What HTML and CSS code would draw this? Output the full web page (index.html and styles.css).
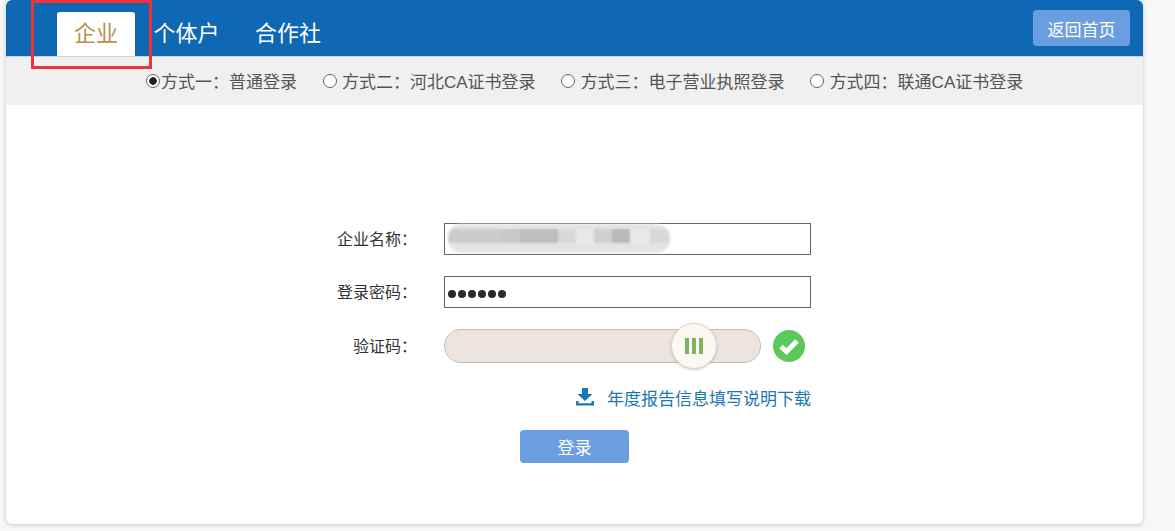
FILE: index.html
```html
<!DOCTYPE html>
<html lang="zh-CN">
<head>
<meta charset="utf-8">
<title>登录</title>
<link rel="stylesheet" href="styles.css">
</head>
<body>
<main class="card">
  <div class="highlight"></div>
  <header class="topbar">
    <nav class="tabs">
      <a class="tab active">企业</a>
      <a class="tab">个体户</a>
      <a class="tab">合作社</a>
    </nav>
    <a class="home-btn">返回首页</a>
  </header>
  <div class="methods">
    <label class="method first"><span class="radio checked"></span>方式一：普通登录</label>
    <label class="method"><span class="radio"></span>方式二：河北CA证书登录</label>
    <label class="method"><span class="radio"></span>方式三：电子营业执照登录</label>
    <label class="method"><span class="radio"></span>方式四：联通CA证书登录</label>
  </div>
  <form class="form">
    <div class="row">
      <span class="label">企业名称：</span>
      <div class="field">
        <div class="smudge"></div>
      </div>
    </div>
    <div class="row">
      <span class="label">登录密码：</span>
      <div class="field dots"><i></i><i></i><i></i><i></i><i></i><i></i></div>
    </div>
    <div class="row slider-row">
      <span class="label">验证码：</span>
      <div class="slider">
        <div class="knob"><b></b><b></b><b></b></div>
      </div>
      <svg class="check" width="32" height="32" viewBox="0 0 32 32"><circle cx="16" cy="16" r="16" fill="#5cc85c"/><path d="M8 16.500l5.500 5L24 11" fill="none" stroke="#fff" stroke-width="5"/></svg>
    </div>
    <a class="download">
      <svg width="20" height="20" viewBox="0 0 20 20"><path d="M7 1h6v6h4.500L10 14 2.500 7H7z" fill="#1a76b8"/><path d="M1 14v4.500h18V14h-2.500v2.200h-13V14z" fill="#1a76b8"/></svg>
      <span>年度报告信息填写说明下载</span>
    </a>
    <button class="login" type="button">登录</button>
  </form>
</main>
</body>
</html>
```
FILE: styles.css
```css
* { box-sizing: border-box; }
html, body { margin: 0; height: 531px; overflow: hidden; }
body {
  background: #f7f7f7;
  padding-left: 6px;
  font-family: "Liberation Sans", "Noto Sans CJK SC", sans-serif;
  font-size: 17px;
  color: #333;
}
.card {
  position: relative;
  width: 1137px;
  height: 524px;
  background: #fff;
  border-radius: 0 0 6px 6px;
  box-shadow: 0 1px 4px rgba(0, 0, 0, .2);
}
.highlight {
  position: absolute;
  left: 25px;
  top: 0;
  width: 121px;
  height: 69px;
  border: 3px solid #ee3338;
  z-index: 2;
}
.topbar {
  display: flex;
  justify-content: space-between;
  height: 57px;
  padding: 10px 13px 0 51px;
  background: #0f68b4;
  border-radius: 6px 6px 0 0;
  border-bottom: 1px solid #b9d3ea;
}
.tabs { display: flex; gap: 1.500px; align-items: flex-end; }
.tab {
  display: flex;
  align-items: center;
  justify-content: center;
  height: 44px;
  padding: 0 17px 6px;
  font-size: 22px;
  color: #fff;
  border-radius: 3px 3px 0 0;
}
.tab.active { background: #fff; color: #b8924a; }
.home-btn {
  display: flex;
  align-items: center;
  justify-content: center;
  width: 97px;
  height: 36px;
  background: #6a9ee0;
  color: #fff;
  border-radius: 4px;
}
.methods {
  display: flex;
  align-items: center;
  gap: 25.500px;
  height: 48px;
  padding: 0 0 2px 140px;
  background: #f0f0f0;
  color: #555;
}
.method { display: flex; align-items: center; }
.radio {
  width: 14px;
  height: 14px;
  margin: 2px 5.500px 0 0;
  border: 1px solid #666;
  border-radius: 50%;
  background: #fff;
}
.radio.checked { background: radial-gradient(circle, #222 0 3.5px, #fff 4px); margin-right: 1px; }
.form {
  display: flex;
  flex-direction: column;
  padding: 118px 0 0 320px;
}
.row {
  display: flex;
  align-items: center;
  height: 32px;
  margin-bottom: 21px;
}
.label {
  width: 91px;
  margin-right: 27px;
  padding-bottom: 2px;
  font-size: 16px;
  text-align: right;
  color: #333;
}
.field {
  position: relative;
  display: flex;
  align-items: center;
  width: 367px;
  height: 32px;
  border: 1px solid #666;
  background: #fff;
}
.smudge {
  position: absolute;
  left: 3px;
  top: 0;
  width: 222px;
  height: 29px;
  border-radius: 14px;
  background:
    linear-gradient(90deg, #cccccc 0 52px, #c9c9c9 52px 72px, #bebebe 72px 110px, #d8d8d8 110px 128px, #e8e8e8 128px 146px, #d0d0d0 146px 164px, #b9b9b9 164px 182px, #e8e8e8 182px 202px, #d8d8d8 202px) 0 5px / 100% 14px no-repeat,
    #e4e4e4;
  filter: blur(1px);
}
.dots { padding: 4px 0 0 3px; gap: 2px; }
.dots i { width: 8px; height: 8px; border-radius: 50%; background: #2a2a2a; }
.slider-row { height: 34px; margin: 0; }
.slider {
  position: relative;
  width: 317px;
  height: 34px;
  background: #ece4de;
  border: 1px solid #c9bcb2;
  border-radius: 17px;
}
.knob {
  position: absolute;
  left: 226px;
  top: -7px;
  display: flex;
  align-items: center;
  justify-content: center;
  gap: 3.500px;
  width: 46px;
  height: 46px;
  background: #fbf8f3;
  border: 1px solid #ddd4c9;
  border-radius: 50%;
  box-shadow: 0 1px 3px rgba(90, 60, 30, .25);
}
.knob b { width: 3.500px; height: 16px; background: #7fb35f; }
.check { margin-left: 12px; }
.download {
  display: flex;
  align-items: center;
  justify-content: flex-end;
  gap: 12px;
  width: 485px;
  height: 26px;
  margin-top: 21px;
  color: #1b78b4;
}
.login {
  width: 109px;
  height: 33px;
  margin: 20px 0 0 194px;
  padding: 0;
  border: 0;
  border-radius: 4px;
  background: #6a9ee0;
  color: #fff;
  font: inherit;
}
```
